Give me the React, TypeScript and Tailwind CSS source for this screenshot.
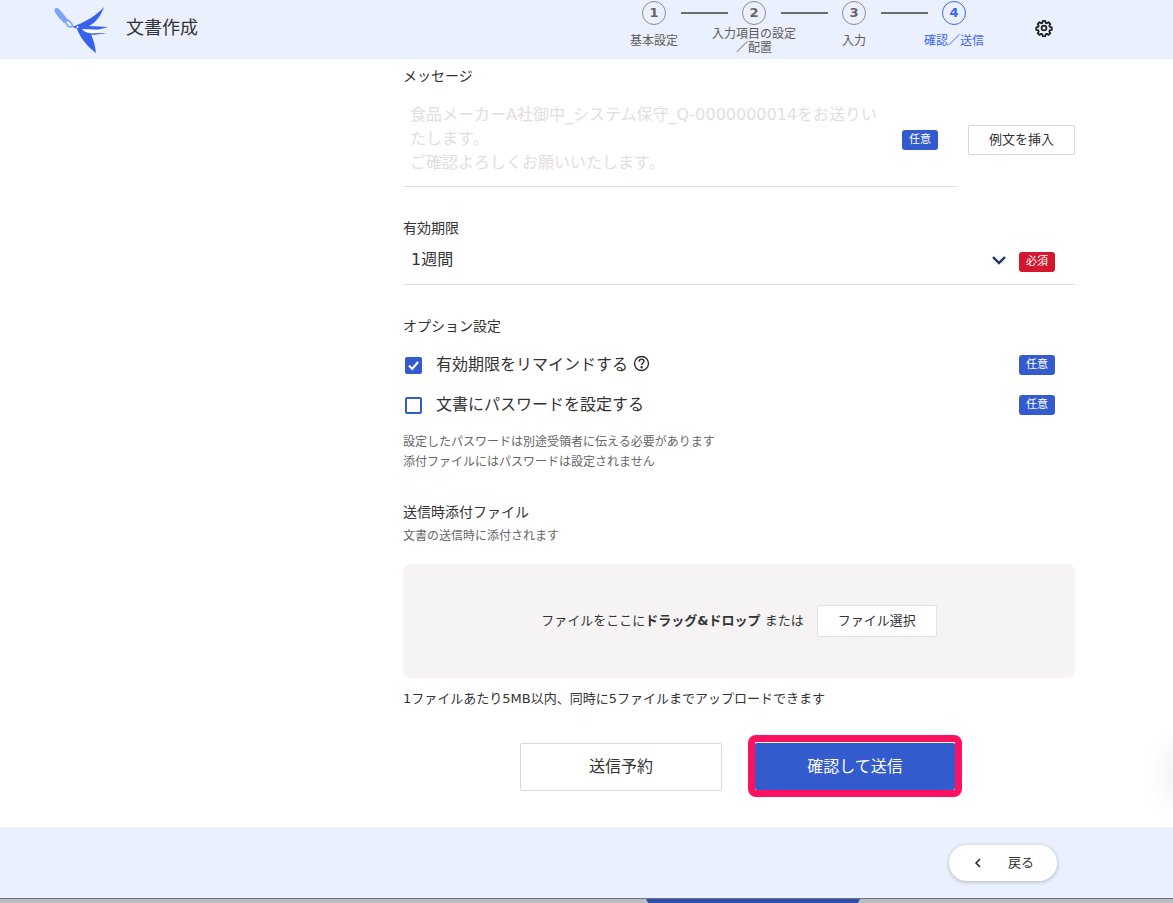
// @ts-nocheck
const font = { fontFamily: '"DejaVu Sans", "Noto Sans CJK JP", sans-serif' }

function Logo() {
  return (
    <svg width="56" height="54" viewBox="0 0 56 54" className="shrink-0">
      <path d="M2 11 C0 7 4 6 6 8 C9 11 12 15 15 19 L11 22 C8 19 4 15 2 11 Z" fill="#7ba4f7" />
      <path d="M12 21 L15 19 L19 23 C20 25 19 26 17 26 L15 25 Z" fill="none" stroke="#7ba4f7" strokeWidth="1.6" />
      <path d="M19 26 L24 24 C32 21 44 14 51 6 C48 14 44 21 36 25 L55 26 L44 29 L28 29 Z" fill="#3563ee" />
      <path d="M26 28 L36 30 C40 36 42 44 43 52 C35 46 28 38 24 28 Z" fill="#3563ee" />
      <path d="M29 28 L52 29 L43 32 C37 33 32 32 29 28 Z" fill="#ffffff" />
      <path d="M34 32 C38 33 42 32 54 32 L44 33.5 C40 34 36 34 34 32 Z" fill="#3563ee" />
      <circle cx="24.5" cy="26" r="1" fill="#ffffff" />
    </svg>
  )
}

function Badge({ label, red = false }) {
  return (
    <span className={red
      ? 'flex h-5 w-9 shrink-0 items-center justify-center rounded-[3px] bg-[#d3172e] text-[11px] text-white'
      : 'flex h-5 w-9 shrink-0 items-center justify-center rounded-[3px] bg-[#335bcd] text-[11px] text-white'}>
      {label}
    </span>
  )
}

function Circle({ n, active = false }) {
  return (
    <div className={active
      ? 'flex h-6 w-6 shrink-0 items-center justify-center rounded-full border border-[#3c66f0] text-[13px] font-bold text-[#3c66f0]'
      : 'flex h-6 w-6 shrink-0 items-center justify-center rounded-full border border-[#8a8a8a] text-[13px] font-bold text-[#6b6360]'}>
      {n}
    </div>
  )
}

function Stepper() {
  return (
    <div className="flex w-[400px] flex-col">
      <div className="flex h-[26px] items-center pl-[38px]">
        <Circle n={1} />
        <div className="mx-[14.5px] h-0.5 w-[47px] bg-[#6b6b6b]" />
        <Circle n={2} />
        <div className="mx-[14.5px] h-0.5 w-[47px] bg-[#6b6b6b]" />
        <Circle n={3} />
        <div className="mx-[14.5px] h-0.5 w-[47px] bg-[#6b6b6b]" />
        <Circle n={4} active />
      </div>
      <div className="flex h-[30px] items-center text-center text-xs leading-[14px] text-[#5f5a58]">
        <div className="w-[100px]">基本設定</div>
        <div className="w-[100px]">入力項目の設定<br />／配置</div>
        <div className="w-[100px]">入力</div>
        <div className="w-[100px] text-[#3c66f0]">確認／送信</div>
      </div>
    </div>
  )
}

function Gear() {
  return (
    <svg width="18" height="18" viewBox="0 0 24 24" fill="none" stroke="#222222" strokeWidth="2.4" strokeLinejoin="round" strokeLinecap="round">
      <path d="M10.3 3h3.4l.5 2.6 1.7.7 2.2-1.5 2.4 2.4-1.5 2.2.7 1.7 2.6.5v3.4l-2.6.5-.7 1.7 1.5 2.2-2.4 2.4-2.2-1.5-1.7.7-.5 2.6h-3.4l-.5-2.6-1.7-.7-2.2 1.5-2.4-2.4 1.5-2.2-.7-1.7-2.6-.5v-3.4l2.6-.5.7-1.7-1.5-2.2 2.4-2.4 2.2 1.5 1.7-.7z" transform="translate(0 -0.5)" />
      <circle cx="12" cy="12" r="3.2" />
    </svg>
  )
}

function Check({ on = false }) {
  return (
    <span className={on
      ? 'flex h-[17px] w-[17px] shrink-0 items-center justify-center rounded-[2px] bg-[#335bcd]'
      : 'flex h-[17px] w-[17px] shrink-0 items-center justify-center rounded-[2px] border-2 border-[#335bcd] bg-white'}>
      {on && (
        <svg width="13" height="13" viewBox="0 0 13 13" fill="none" stroke="#ffffff" strokeWidth="2">
          <path d="M2 6.5 L5.2 10 L11 3" />
        </svg>
      )}
    </span>
  )
}

function Help() {
  return (
    <svg width="17" height="17" viewBox="0 0 17 17" fill="none" stroke="#2b2b2b" strokeWidth="1.4" className="mb-1 ml-[5px]">
      <circle cx="8.5" cy="8.5" r="7" />
      <path d="M6 6.7 C6 5 7.2 4.3 8.5 4.3 C10 4.3 11 5.2 11 6.4 C11 8 8.6 8 8.6 10" />
      <circle cx="8.6" cy="12.3" r="0.5" fill="#2b2b2b" />
    </svg>
  )
}

export default function App() {
  return (
    <div style={font} className="relative flex h-[903px] flex-col overflow-hidden bg-white text-[#333333]">
      <header className="flex h-[59px] shrink-0 items-start bg-[#eaf0fd]">
        <div className="ml-[53px] mt-[1px]"><Logo /></div>
        <div className="ml-[17px] mt-[16px] text-lg leading-6">文書作成</div>
        <div className="ml-auto"><Stepper /></div>
        <div className="ml-[31px] mr-[120px] mt-[19px]"><Gear /></div>
      </header>

      <main className="ml-[403px] flex w-[672px] flex-1 flex-col">
        <div className="mt-[7px] text-sm leading-5">メッセージ</div>

        <div className="flex items-center">
          <div className="w-[555px] border-b border-[#e2e0e0] pb-[11px] pt-[17px]">
            <div className="whitespace-nowrap pl-[7px] text-base leading-6 text-[#e3dede]">
              食品メーカーA社御中_システム保守_Q-0000000014をお送りい<br />たします。<br />ご確認よろしくお願いいたします。
            </div>
          </div>
          <div className="ml-[-56px] mt-[7px]"><Badge label="任意" /></div>
          <button className="ml-[30px] mt-[6px] h-[30px] w-[107px] rounded-[2px] border border-[#d9d9d9] bg-white text-[13px]">例文を挿入</button>
        </div>

        <div className="mt-[31px] text-sm leading-5">有効期限</div>
        <div className="mt-[2px] flex h-[45px] items-center border-b border-[#e2e0e0] pl-2 pr-5">
          <span className="mb-1 text-base">1週間</span>
          <svg width="16" height="10" viewBox="0 0 16 10" fill="none" stroke="#1c3260" strokeWidth="2.4" className="mb-1 ml-auto mr-[12px]">
            <path d="M2 2 L8 8 L14 2" />
          </svg>
          <Badge label="必須" red />
        </div>

        <div className="mt-[31px] text-sm leading-5">オプション設定</div>
        <div className="mt-[19px] flex h-5 items-center pl-[2px] pr-5">
          <Check on />
          <span className="ml-[14px] text-base leading-5">有効期限をリマインドする</span>
          <Help />
          <div className="ml-auto"><Badge label="任意" /></div>
        </div>
        <div className="mt-5 flex h-5 items-center pl-[2px] pr-5">
          <Check />
          <span className="ml-[14px] text-base leading-5">文書にパスワードを設定する</span>
          <div className="ml-auto"><Badge label="任意" /></div>
        </div>

        <div className="mt-[17px] text-xs leading-5 text-[#666666]">
          設定したパスワードは別途受領者に伝える必要があります<br />添付ファイルにはパスワードは設定されません
        </div>

        <div className="mt-[30px] text-sm leading-5">送信時添付ファイル</div>
        <div className="mt-[4px] text-xs leading-5 text-[#666666]">文書の送信時に添付されます</div>

        <div className="mt-[18px] flex h-[114px] items-center justify-center rounded-lg bg-[#f5f3f4] text-[13px]">
          <span>ファイルをここに<b className="font-bold">ドラッグ&ドロップ</b> または</span>
          <button className="ml-[13px] h-8 w-[120px] rounded-[2px] border border-[#e2e0e0] bg-white text-[13px]">ファイル選択</button>
        </div>

        <div className="mt-[11px] text-[13px] leading-5">1ファイルあたり5MB以内、同時に5ファイルまでアップロードできます</div>

        <div className="mt-[26px] flex items-center">
          <button className="ml-[117px] mt-[2px] h-[48px] w-[202px] rounded-[2px] border border-[#d9d9d9] bg-white text-base">送信予約</button>
          <div className="ml-[26px] h-[62px] w-[214px] rounded-lg border-[7px] border-[#ff1161]">
            <button className="h-full w-full rounded-[2px] border-t border-white bg-[#335bcd] text-base text-white">確認して送信</button>
          </div>
        </div>
      </main>

      <footer className="flex h-[71px] shrink-0 items-start justify-end bg-[#eaf0fd] pr-[116px] pt-[18px]">
        <button className="flex h-9 w-[108px] items-center rounded-full bg-white pl-[25px] text-[13px] shadow-[0_1px_4px_rgba(0,0,0,0.25)]">
          <svg width="8" height="10" viewBox="0 0 8 10" fill="none" stroke="#222222" strokeWidth="1.5">
            <path d="M6 1 L2 5 L6 9" />
          </svg>
          <span className="ml-[26px]">戻る</span>
        </button>
      </footer>

      <div className="h-[5px] shrink-0 border-t border-[#6e7378] bg-[#b9bcc2] pl-[646px]">
        <div className="h-full w-[214px] bg-[#2b4fb0] [clip-path:polygon(0_0,100%_0,99%_100%,1%_100%)]" />
      </div>

      <div className="absolute right-[-22px] top-[745px] h-[60px] w-[30px] rounded-full bg-black/5 blur-md" />
    </div>
  )
}
